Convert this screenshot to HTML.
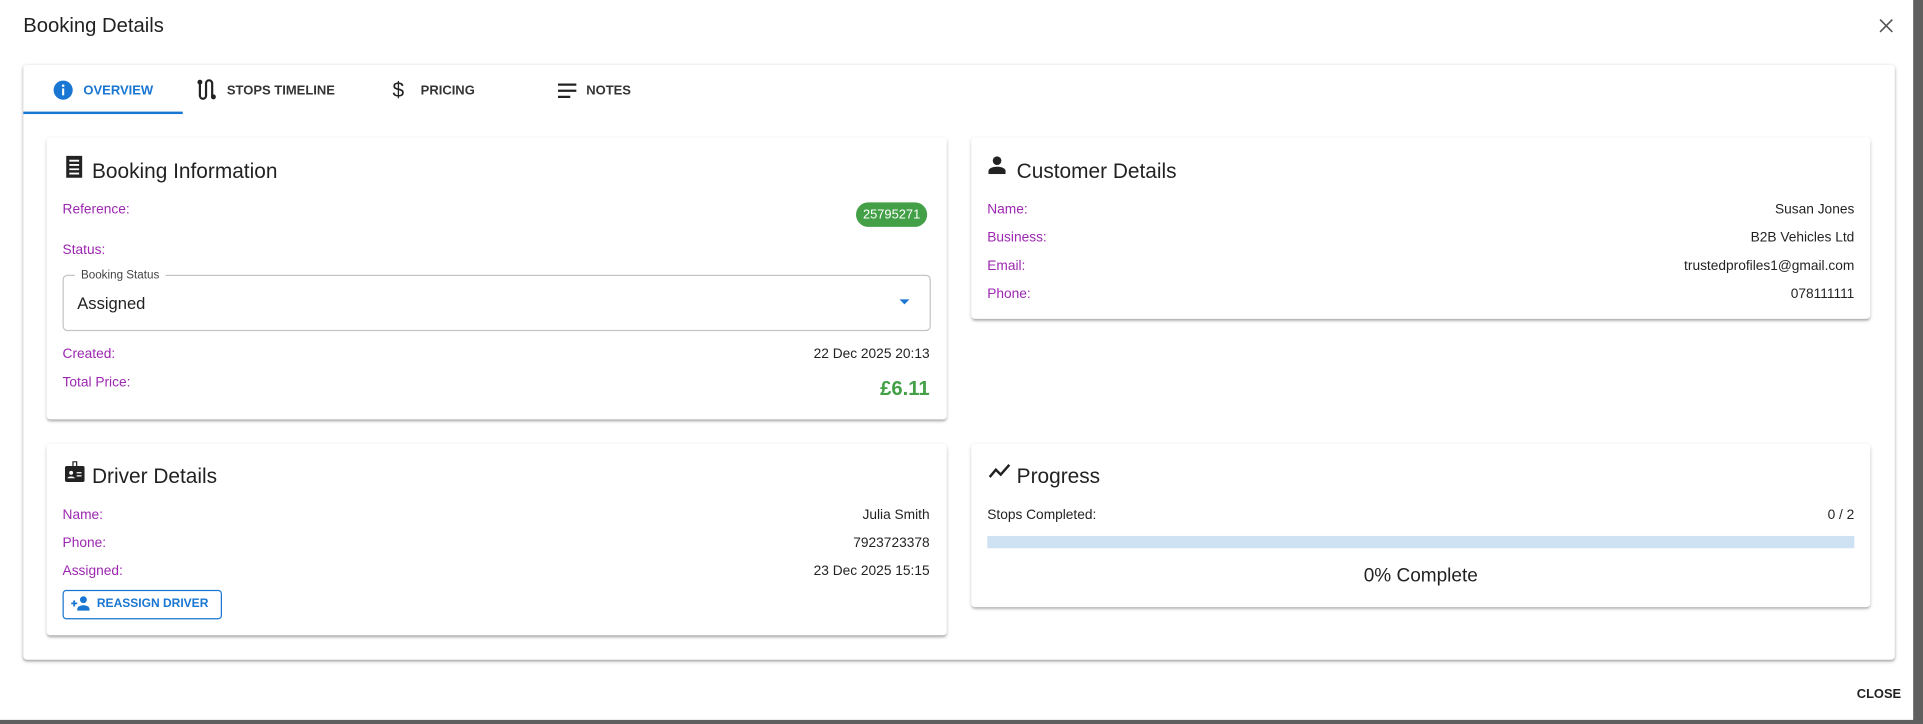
<!DOCTYPE html>
<html><head><meta charset="utf-8"><style>
html,body{margin:0;padding:0;width:1923px;height:723px;overflow:hidden;background:#5f5f5f;font-family:"Liberation Sans",sans-serif;color:rgba(0,0,0,.87)}
#w{position:absolute;left:0;top:0;width:1568px;height:590px;transform:scale(1.2264);transform-origin:0 0}
.dlg{position:absolute;left:0;top:0;width:1560px;height:587px;background:#fff}
.abs{position:absolute}
.title{left:19px;top:12px;font-size:16.5px;font-weight:500}
.paper{left:19px;top:53px;width:1526px;height:485px;background:#fff;box-shadow:0 1px 3px rgba(0,0,0,.25),0 1px 1px rgba(0,0,0,.12);border-radius:3px}
.tab{top:68px;font-size:10.6px;font-weight:bold;color:rgba(0,0,0,.8)}
.card{background:#fff;border-radius:3px;box-shadow:0 2px 2px -1px rgba(0,0,0,.25),0 1px 3px rgba(0,0,0,.15)}
.h{font-size:17px;font-weight:500;color:rgba(0,0,0,.87)}
.lbl{font-size:11.2px;color:#9c27b0}
.val{font-size:11.2px;color:rgba(0,0,0,.87);text-align:right}
</style></head><body><div id="w">
<div class="dlg">
<div class="abs title">Booking Details</div>
<svg class="abs" style="left:1532px;top:15px" width="12" height="12" viewBox="0 0 12 12"><path d="M1 1L11 11M11 1L1 11" stroke="#555" stroke-width="1.3"/></svg>

<div class="abs paper"></div>
<svg class="abs" style="left:43px;top:65px" width="17" height="17" viewBox="0 0 24 24"><circle cx="12" cy="12" r="11" fill="#1976d2"/><rect x="10.8" y="10" width="2.4" height="8" fill="#fff"/><circle cx="12" cy="6.8" r="1.5" fill="#fff"/></svg>
<div class="abs tab" style="left:68px;color:#1976d2">OVERVIEW</div>
<div class="abs" style="left:19px;top:91px;width:130px;height:2px;background:#1976d2"></div>
<svg class="abs" style="left:160px;top:64px" width="17" height="18" viewBox="0 0 17 18"><circle cx="3" cy="3" r="2" fill="#222"/><circle cx="14" cy="15" r="2" fill="#222"/><path d="M3 3V14a2.5 2.5 0 0 0 5 0V4a2.5 2.5 0 0 1 5 0V15" fill="none" stroke="#222" stroke-width="1.8"/></svg>
<div class="abs tab" style="left:185px">STOPS TIMELINE</div>
<div class="abs" style="left:320px;top:64px;font-size:17px;color:#222">$</div>
<div class="abs tab" style="left:343px">PRICING</div>
<svg class="abs" style="left:455px;top:68px" width="15" height="12" viewBox="0 0 15 12"><path d="M0 1H15M0 6H15M0 11H10" stroke="#222" stroke-width="1.8"/></svg>
<div class="abs tab" style="left:478px">NOTES</div>

<div class="abs card" style="left:38px;top:112px;width:734px;height:230px"></div>
<svg class="abs" style="left:53px;top:127px" width="15" height="18" viewBox="0 0 15 18"><rect x="1" y="0" width="13" height="18" fill="#222"/><path d="M3.5 4H11.5M3.5 7.5H11.5M3.5 11H11.5M3.5 14.5H11.5" stroke="#fff" stroke-width="1.5"/></svg>
<div class="abs h" style="left:75px;top:130px">Booking Information</div>
<div class="abs lbl" style="left:51px;top:165px">Reference:</div>
<div class="abs" style="left:698px;top:165px;width:58px;height:20px;border-radius:10px;background:#43a047;color:#fff;font-size:10.5px;line-height:20px;text-align:center">25795271</div>
<div class="abs lbl" style="left:51px;top:198px">Status:</div>
<div class="abs" style="left:51px;top:224px;width:706px;height:44px;border:1px solid #c4c4c4;border-radius:4px"></div>
<div class="abs" style="left:61px;top:219px;padding:0 5px;background:#fff;font-size:9.5px;color:rgba(0,0,0,.75)">Booking Status</div>
<div class="abs" style="left:63px;top:240px;font-size:13.5px">Assigned</div>
<svg class="abs" style="left:733px;top:244px" width="9" height="5" viewBox="0 0 10 6"><path d="M0 0H10L5 5Z" fill="#1976d2"/></svg>
<div class="abs lbl" style="left:51px;top:283px">Created:</div>
<div class="abs val" style="right:802px;top:283px">22 Dec 2025 20:13</div>
<div class="abs lbl" style="left:51px;top:306px">Total Price:</div>
<div class="abs" style="right:802px;top:308px;font-size:16.5px;font-weight:bold;color:#43a047">£6.11</div>

<div class="abs card" style="left:792px;top:112px;width:733px;height:148px"></div>
<svg class="abs" style="left:806px;top:127px" width="14" height="15" viewBox="0 0 14 15"><circle cx="7" cy="4" r="3.5" fill="#222"/><path d="M0 15V12.5C0 10 4 9 7 9S14 10 14 12.5V15Z" fill="#222"/></svg>
<div class="abs h" style="left:829px;top:130px">Customer Details</div>
<div class="abs lbl" style="left:805px;top:165px">Name:</div>
<div class="abs val" style="right:48px;top:165px">Susan Jones</div>
<div class="abs lbl" style="left:805px;top:188px">Business:</div>
<div class="abs val" style="right:48px;top:188px">B2B Vehicles Ltd</div>
<div class="abs lbl" style="left:805px;top:211px">Email:</div>
<div class="abs val" style="right:48px;top:211px">trustedprofiles1@gmail.com</div>
<div class="abs lbl" style="left:805px;top:234px">Phone:</div>
<div class="abs val" style="right:48px;top:234px">078111111</div>

<div class="abs card" style="left:38px;top:362px;width:734px;height:156px"></div>
<svg class="abs" style="left:53px;top:376px" width="16" height="17" viewBox="0 0 16 17"><rect x="0" y="4" width="16" height="13" rx="1.5" fill="#222"/><rect x="6" y="0" width="4" height="6" fill="#222"/><rect x="7" y="1" width="2" height="3" fill="#fff"/><circle cx="5" cy="9.5" r="1.6" fill="#fff"/><path d="M2 14c0-2 6-2 6 0Z" fill="#fff"/><path d="M9.5 9.5H13.5M9.5 12H13.5" stroke="#fff" stroke-width="1"/></svg>
<div class="abs h" style="left:75px;top:379px">Driver Details</div>
<div class="abs lbl" style="left:51px;top:414px">Name:</div>
<div class="abs val" style="right:802px;top:414px">Julia Smith</div>
<div class="abs lbl" style="left:51px;top:437px">Phone:</div>
<div class="abs val" style="right:802px;top:437px">7923723378</div>
<div class="abs lbl" style="left:51px;top:460px">Assigned:</div>
<div class="abs val" style="right:802px;top:460px">23 Dec 2025 15:15</div>
<div class="abs" style="left:51px;top:481px;width:128px;height:22px;border:1px solid #1976d2;border-radius:3px"></div>
<svg class="abs" style="left:58px;top:486px" width="15" height="12" viewBox="0 0 15 12"><path d="M0 6H5M2.5 3.5V8.5" stroke="#1976d2" stroke-width="1.5"/><circle cx="10" cy="3" r="2.8" fill="#1976d2"/><path d="M5 12V10.5C5 8.5 8 7.5 10 7.5S15 8.5 15 10.5V12Z" fill="#1976d2"/></svg>
<div class="abs" style="left:79px;top:487px;font-size:9.8px;font-weight:bold;color:#1976d2">REASSIGN DRIVER</div>

<div class="abs card" style="left:792px;top:362px;width:733px;height:133px"></div>
<svg class="abs" style="left:806px;top:378px" width="18" height="12" viewBox="0 0 18 12"><path d="M1 11L6 5L10 9L17 1" fill="none" stroke="#222" stroke-width="2"/></svg>
<div class="abs h" style="left:829px;top:379px">Progress</div>
<div class="abs" style="left:805px;top:414px;font-size:11.2px">Stops Completed:</div>
<div class="abs val" style="right:48px;top:414px">0 / 2</div>
<div class="abs" style="left:805px;top:437px;width:707px;height:10px;background:#cfe2f3"></div>
<div class="abs" style="left:792px;width:733px;top:461px;text-align:center;font-size:15.5px;font-weight:500">0% Complete</div>

<div class="abs" style="left:1514px;top:560px;font-size:10.5px;font-weight:bold">CLOSE</div>
</div>
</div></body></html>
